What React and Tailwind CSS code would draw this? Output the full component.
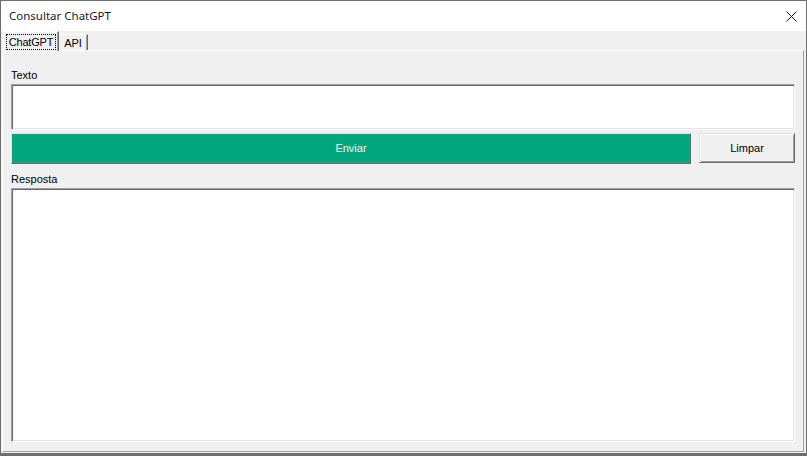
import React from 'react';

const sunken =
  'bg-white border border-t-[#a0a0a0] border-l-[#a0a0a0] border-r-white border-b-white shadow-[inset_1px_1px_0_#696969,inset_-1px_-1px_0_#e3e3e3]';

function CloseIcon() {
  return (
    <svg width="11" height="11" viewBox="0 0 11 11" className="block">
      <path d="M0.5 0.5 L10.5 10.5 M10.5 0.5 L0.5 10.5" stroke="#1a1a1a" strokeWidth="1" fill="none" />
    </svg>
  );
}

export default function App() {
  return (
    <div
      className="w-[807px] h-[456px] flex flex-col bg-[#f0f0f0] border-x border-t border-b-[3px] border-[#6e6e6e] text-[11px] text-black overflow-hidden"
      style={{ fontFamily: '"Liberation Sans", Arial, sans-serif' }}
    >
      {/* Title bar */}
      <div className="h-[30px] shrink-0 bg-white flex items-center justify-between pl-[8px] pr-[9px]">
        <span className="text-[11.5px] text-[#1a1a1a]" style={{ fontFamily: '"Noto Sans", "Liberation Sans", sans-serif' }}>
          Consultar ChatGPT
        </span>
        <CloseIcon />
      </div>

      {/* Tabs */}
      <div className="h-[19px] shrink-0 flex items-end pl-[2px] relative z-10">
        <div className="h-[20px] -mb-[1px] w-[56px] flex items-center justify-center bg-[#f0f0f0] border-t border-l border-white border-r border-r-[#696969] shadow-[inset_-1px_0_0_#a0a0a0]">
          <span className="border border-dotted border-black px-[2px] leading-[14px] tracking-[-0.2px]">ChatGPT</span>
        </div>
        <div className="h-[16px] w-[29px] flex items-center justify-center border-t border-white border-r border-r-[#696969] shadow-[inset_-1px_0_0_#a0a0a0] pt-[1px]">
          API
        </div>
      </div>

      {/* Panel */}
      <div className="flex-1 ml-[1px] mr-[2px] mb-[1px] flex flex-col border-t border-l border-white border-r border-r-[#a0a0a0] border-b border-b-[#a0a0a0] pt-[18px] pl-[8px] pr-[8px]">
        <div className="h-[13px] leading-[13px] mb-[2px]">Texto</div>
        <div className={`h-[46px] ${sunken}`} />

        <div className="flex mt-[3px] h-[31px] gap-[8px]">
          <button className="w-[680px] bg-[#02a67f] text-[#f4f4f4] border border-t-[#e3e3e3] border-l-[#e3e3e3] border-r-[#696969] border-b-[#696969] shadow-[inset_-1px_-1px_0_#4f8b7b]">
            Enviar
          </button>
          <button className="flex-1 mb-[1px] bg-[#f0f0f0] border border-t-[#e3e3e3] border-l-[#e3e3e3] border-r-[#696969] border-b-[#696969] shadow-[inset_1px_1px_0_#ffffff,inset_-1px_-1px_0_#a0a0a0]">
            Limpar
          </button>
        </div>

        <div className="h-[13px] leading-[13px] mt-[9px] mb-[2px]">Resposta</div>
        <div className={`h-[254px] ${sunken}`} />
      </div>
    </div>
  );
}
